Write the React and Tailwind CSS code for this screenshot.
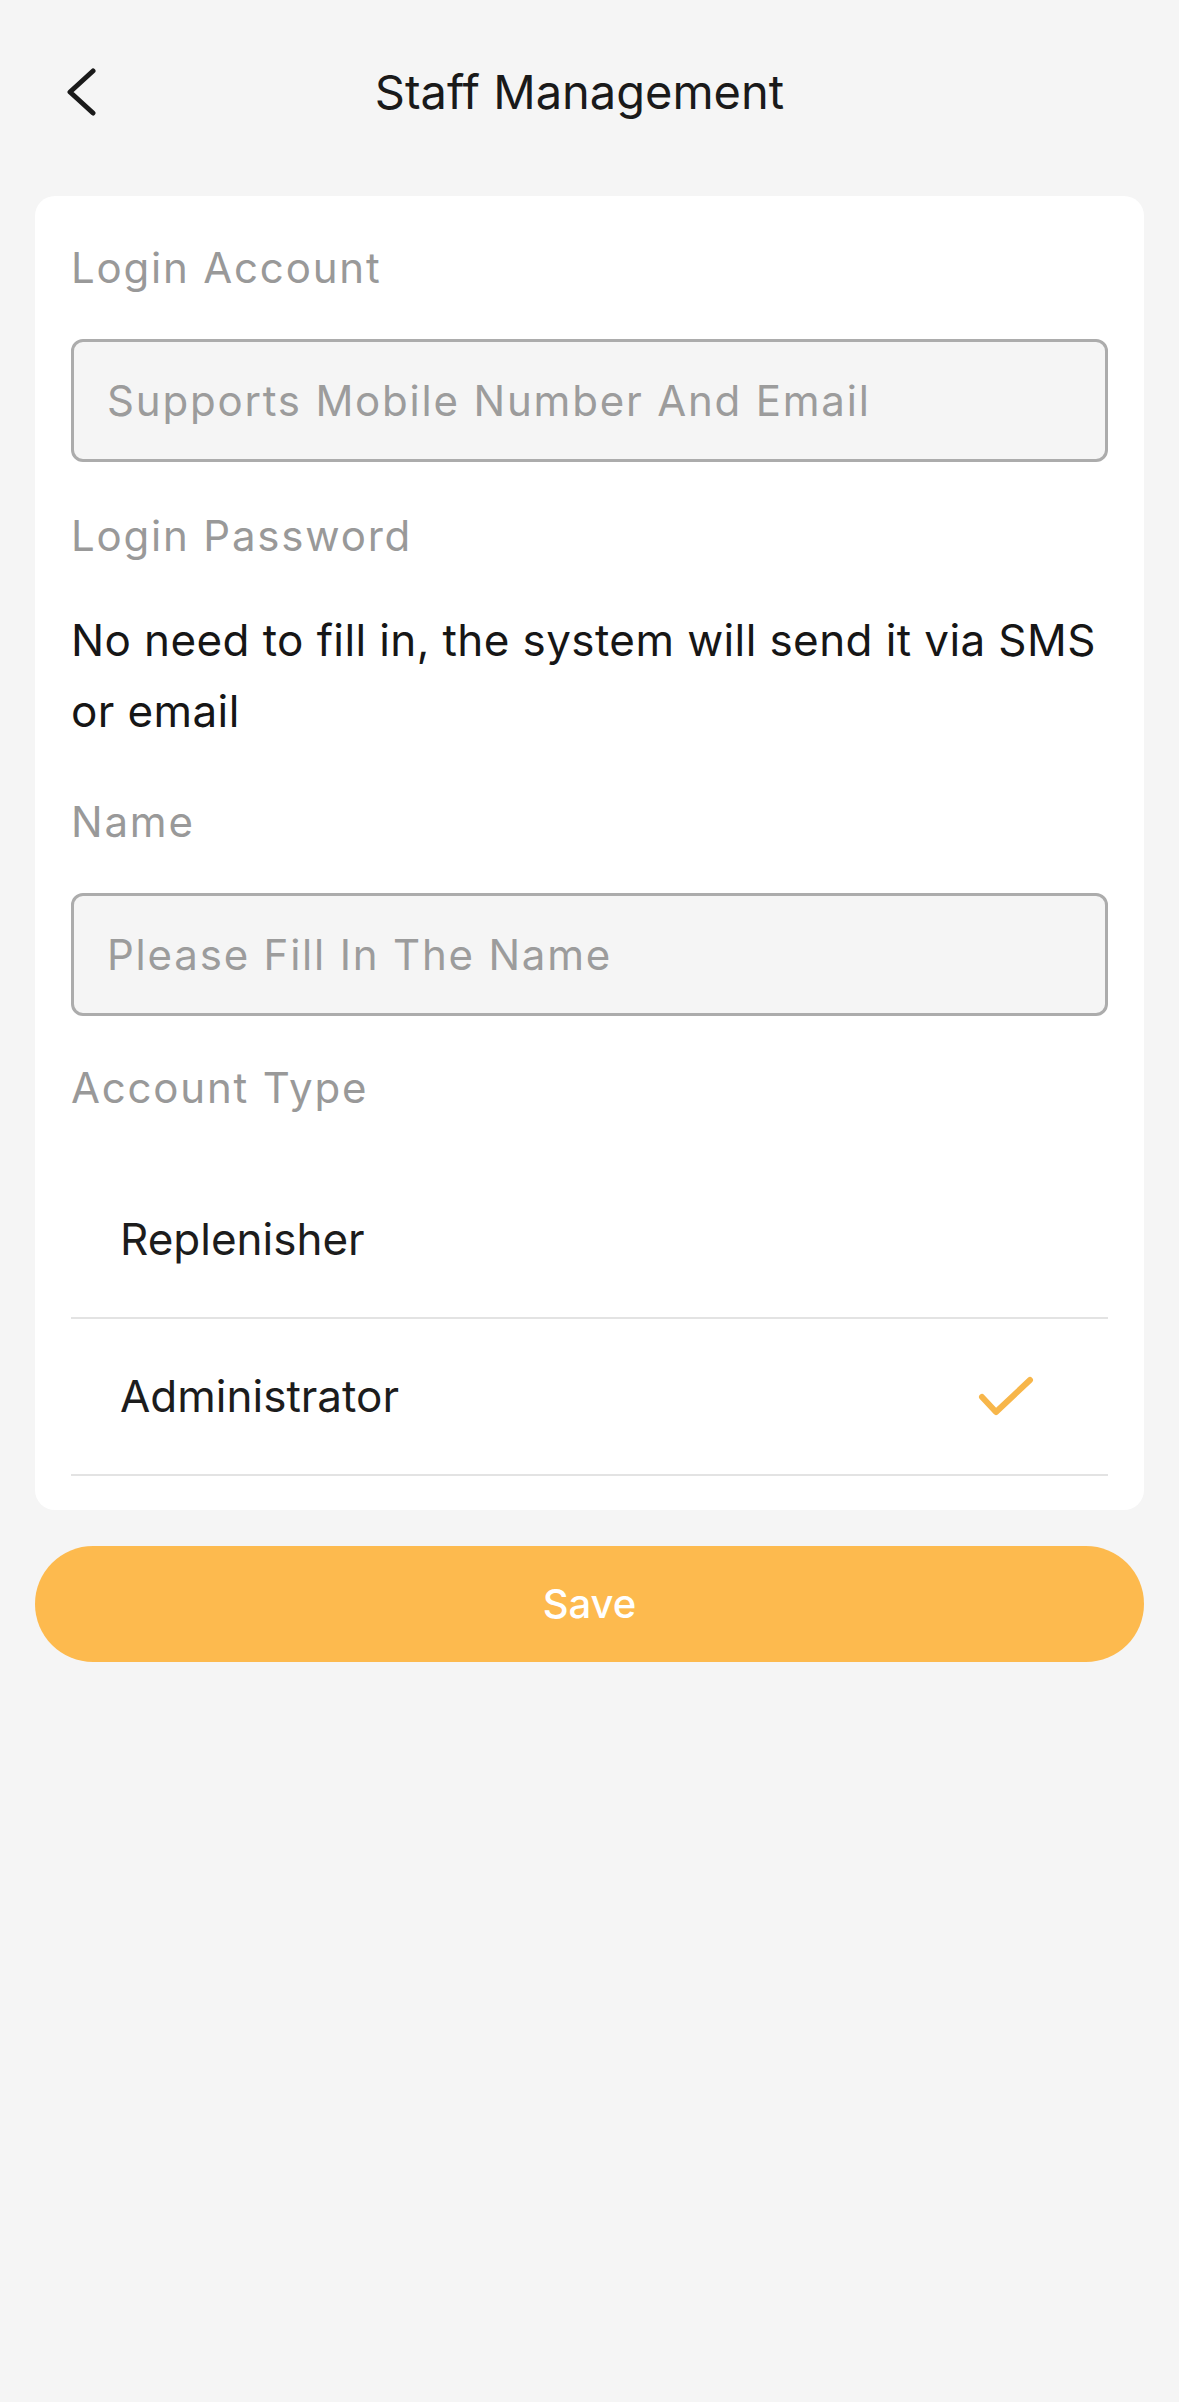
import { useState } from "react";

function Field({ label, placeholder }) {
  return (
    <div>
      <div className="text-[42px] leading-[50px] tracking-[1.8px] text-[#999999]">{label}</div>
      <input
        type="text"
        placeholder={placeholder}
        className="mt-[46px] block h-[123px] w-full rounded-[12px] border-[3px] border-[#acacac] bg-[#f5f5f5] px-[33px] text-[42px] tracking-[1.8px] text-[#222] outline-none placeholder:text-[#9c9c9c]"
      />
    </div>
  );
}

function TypeRow({ title, selected, onClick }) {
  return (
    <div
      onClick={onClick}
      className="flex h-[157px] cursor-pointer items-center justify-between border-b-2 border-[#e3e3e3] pl-[49px] pr-[74px]"
    >
      <span className="text-[44px] leading-[53px] text-[#1c1c1c]">{title}</span>
      {selected && (
        <svg width="56" height="44" viewBox="0 0 56 44" fill="none">
          <path
            d="M4 22 L18 37 L52 5"
            stroke="#f7b64a"
            strokeWidth="6"
            strokeLinecap="round"
            strokeLinejoin="round"
          />
        </svg>
      )}
    </div>
  );
}

export default function App() {
  const [type, setType] = useState("Administrator");

  return (
    <div className="min-h-screen w-full bg-[#f5f5f5] font-['Inter',sans-serif] pb-20">
      <div className="grid h-[184px] grid-cols-[160px_1fr_180px] items-center">
        <div className="pl-[66px]">
          <svg width="30" height="48" viewBox="0 0 30 48" fill="none">
            <path
              d="M27 3 L4 24 L27 45"
              stroke="#1a1a1a"
              strokeWidth="5"
              strokeLinecap="round"
              strokeLinejoin="round"
            />
          </svg>
        </div>
        <h1 className="text-center text-[47px] font-normal text-[#1a1a1a]">
          Staff Management
        </h1>
        <div />
      </div>

      <div className="mx-[35px] mt-[12px] rounded-[20px] bg-white px-[36px] pt-[47px] pb-[34px]">
        <Field label="Login Account" placeholder="Supports Mobile Number And Email" />

        <div className="mt-[49px] text-[42px] leading-[50px] tracking-[1.8px] text-[#999999]">
          Login Password
        </div>
        <p className="mt-[44px] text-[44px] leading-[71px] tracking-[0.4px] text-[#161616]">
          No need to fill in, the system will send it via SMS or email
        </p>

        <div className="mt-[50px]">
          <Field label="Name" placeholder="Please Fill In The Name" />
        </div>

        <div className="mt-[47px] text-[42px] leading-[50px] tracking-[1.8px] text-[#999999]">
          Account Type
        </div>
        <div className="mt-[49px]">
          {["Replenisher", "Administrator"].map((t) => (
            <TypeRow
              key={t}
              title={t}
              selected={type === t}
              onClick={() => setType(t)}
            />
          ))}
        </div>
      </div>

      <div className="mx-[35px] mt-[36px]">
        <button className="h-[116px] w-full rounded-full bg-[#fdba4e] text-[40px] font-medium text-white">
          Save
        </button>
      </div>
    </div>
  );
}
